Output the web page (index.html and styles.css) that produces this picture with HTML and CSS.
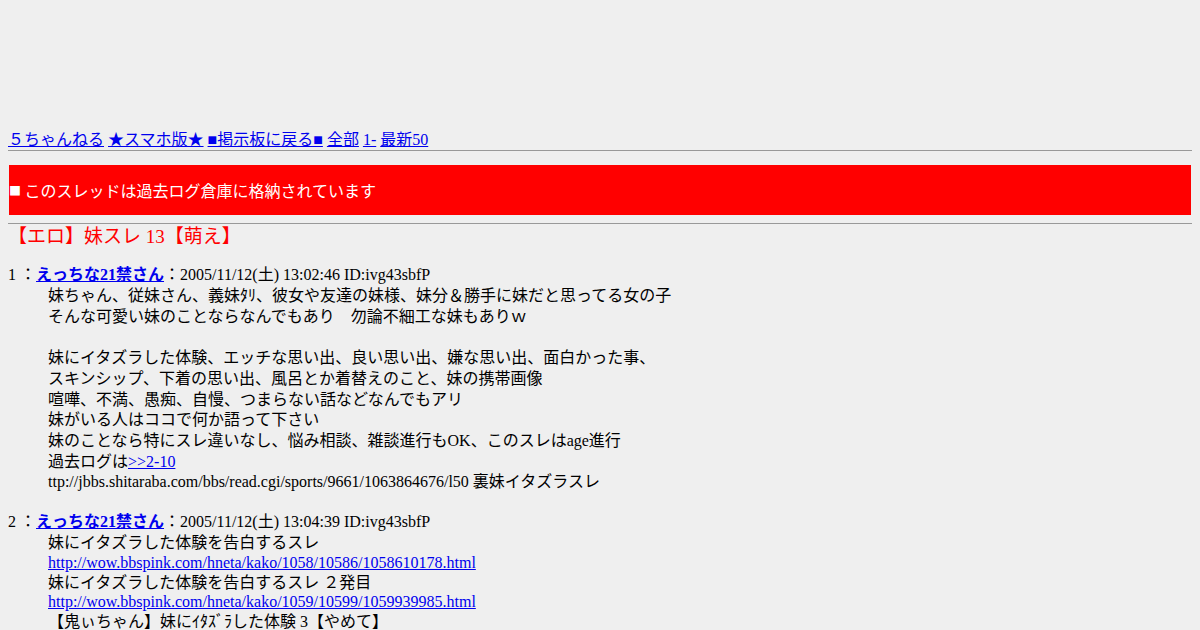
FILE: index.html
```html
<!DOCTYPE html>
<html lang="ja">
<head>
    <meta charset="UTF-8">
    <title>【エロ】妹スレ 13【萌え】</title>
    <link rel="stylesheet" href="styles.css">
</head>
<body>

    <!-- 広告枠 -->
    <div class="ad-space"></div>

    <div class="nav">
        <a href="#">５ちゃんねる</a>
        <a href="#">★スマホ版★</a>
        <a href="#">■掲示板に戻る■</a>
        <a href="#">全部</a>
        <a href="#">1-</a>
        <a href="#">最新50</a>
    </div>
    <hr>

    <div class="kako"><span class="sq">■</span> このスレッドは過去ログ倉庫に格納されています</div>
    <hr>

    <h1 class="title">【エロ】妹スレ 13【萌え】</h1>

    <dl class="thread">
        <dt>1 ：<a class="name" href="#">えっちな21禁さん</a>：2005/11/12(土) 13:02:46 ID:ivg43sbfP</dt>
        <dd>妹ちゃん、従妹さん、義妹ﾀﾘ、彼女や友達の妹様、妹分＆勝手に妹だと思ってる女の子<br>
そんな可愛い妹のことならなんでもあり　勿論不細工な妹もありｗ<br>
<br>
妹にイタズラした体験、エッチな思い出、良い思い出、嫌な思い出、面白かった事、<br>
スキンシップ、下着の思い出、風呂とか着替えのこと、妹の携帯画像<br>
喧嘩、不満、愚痴、自慢、つまらない話などなんでもアリ<br>
妹がいる人はココで何か語って下さい<br>
妹のことなら特にスレ違いなし、悩み相談、雑談進行もOK、このスレはage進行<br>
過去ログは<a href="#">&gt;&gt;2-10</a><br>
ttp://jbbs.shitaraba.com/bbs/read.cgi/sports/9661/1063864676/l50 裏妹イタズラスレ</dd>

        <dt>2 ：<a class="name" href="#">えっちな21禁さん</a>：2005/11/12(土) 13:04:39 ID:ivg43sbfP</dt>
        <dd class="links">妹にイタズラした体験を告白するスレ<br>
<a href="#">http://wow.bbspink.com/hneta/kako/1058/10586/1058610178.html</a><br>
妹にイタズラした体験を告白するスレ ２発目<br>
<a href="#">http://wow.bbspink.com/hneta/kako/1059/10599/1059939985.html</a><br>
【鬼ぃちゃん】妹にｲﾀｽﾞﾗした体験 3【やめて】</dd>
    </dl>

</body>
</html>
```

FILE: styles.css
```css
body {
    font-family: "Liberation Serif", "Noto Sans CJK JP", serif;
    font-size: 16px;
    background-color: #efefef;
    color: #000;
    margin: 8px;
}
a {
    color: #0000ee;
}
.ad-space {
    height: 121px;
}
.nav {
    line-height: 21px;
}
hr {
    border: none;
    border-top: 1px solid #999;
    margin: 0;
}
.kako {
    background-color: #ff0000;
    color: #fff;
    font-family: "Noto Sans CJK JP", sans-serif;
    margin: 14px 1px 8px;
    height: 50px;
    line-height: 50px;
}
.kako .sq {
    font-size: 12px;
    vertical-align: 1px;
}
.title {
    color: #ff0000;
    font-size: 19px;
    font-weight: normal;
    margin: 1px 0 14px;
    line-height: 24px;
}
.thread {
    margin: 0;
}
.thread dt {
    line-height: 23px;
}
.thread dd {
    margin: 0 0 17px 40px;
    line-height: 20.7px;
}
.thread dd.links {
    line-height: 19.8px;
}
.name {
    font-weight: bold;
}
```
